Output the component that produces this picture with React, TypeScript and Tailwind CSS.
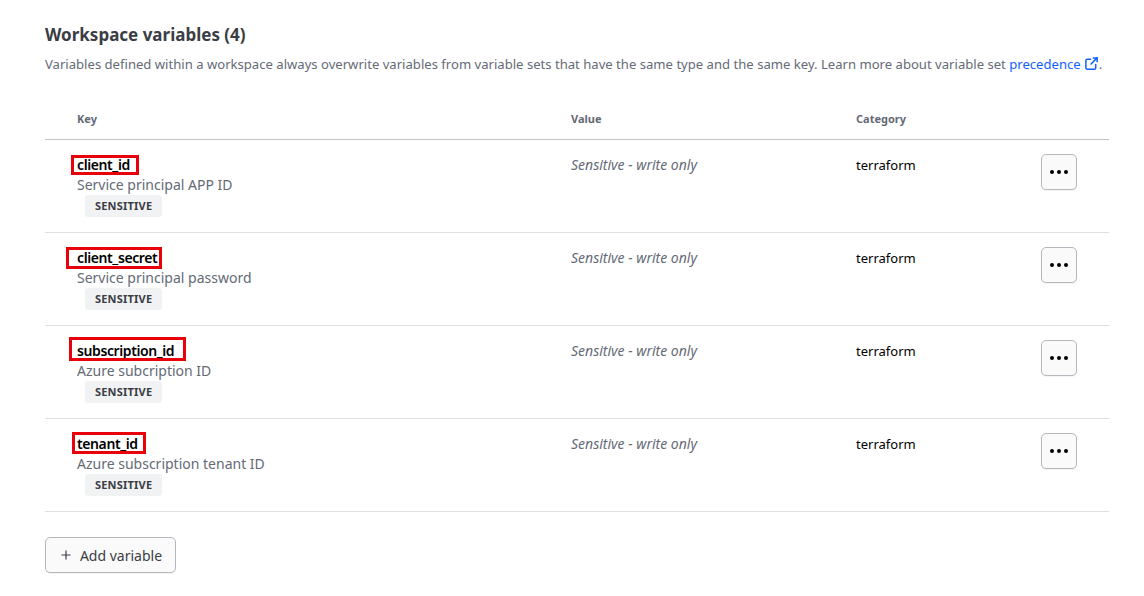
import { Plus } from "lucide-react";

type Variable = {
  name: string;
  description: string;
  // red annotation box, relative to the key text
  box: { left: number; top: number; width: number; height: number };
};

const variables: Variable[] = [
  {
    name: "client_id",
    description: "Service principal APP ID",
    box: { left: -6, top: 0, width: 68, height: 20 },
  },
  {
    name: "client_secret",
    description: "Service principal password",
    box: { left: -11, top: -1, width: 96, height: 22 },
  },
  {
    name: "subscription_id",
    description: "Azure subcription ID",
    box: { left: -8, top: -4, width: 117, height: 24 },
  },
  {
    name: "tenant_id",
    description: "Azure subscription tenant ID",
    box: { left: -5, top: -2, width: 74, height: 22 },
  },
];

const ExternalLink = () => (
  <svg
    viewBox="0 0 16 16"
    className="inline-block w-[15px] h-[15px] ml-[3px] -mt-[3px] align-middle"
    fill="none"
    stroke="currentColor"
    strokeWidth="1.6"
    strokeLinecap="round"
    strokeLinejoin="round"
  >
    <path d="M12.5 9v3.5a1.5 1.5 0 0 1-1.5 1.5H3.5A1.5 1.5 0 0 1 2 12.5V5a1.5 1.5 0 0 1 1.5-1.5H7" />
    <path d="M10 2h4v4" />
    <path d="M14 2 7.5 8.5" />
  </svg>
);

const VariableRow = ({ v }: { v: Variable }) => (
  <div className="grid grid-cols-[526px_285px_185px_68px] border-b border-[#dedfe3] pt-[15px] pb-[15px]">
    <div className="pl-8 flex flex-col items-start">
      <span className="relative text-[14px] leading-5 font-semibold tracking-[-0.4px] text-black">
        {v.name}
        <span
          className="absolute border-[3px] border-[#e8000b] pointer-events-none"
          style={{
            left: v.box.left,
            top: v.box.top,
            width: v.box.width,
            height: v.box.height,
          }}
        />
      </span>
      <span className="text-[14px] leading-5 text-[#656a76]">
        {v.description}
      </span>
      <span className="ml-2 h-[22px] px-[10px] flex items-center rounded-[3px] bg-[#f1f2f3] text-[11px] font-bold tracking-[0.2px] text-[#3b3d45]">
        SENSITIVE
      </span>
    </div>
    <div className="text-[14px] leading-5 italic text-[#656a76]">
      Sensitive - write only
    </div>
    <div className="text-[13px] leading-5 text-black">terraform</div>
    <div className="-mt-[1px]">
      <button className="w-9 h-9 flex items-center justify-center gap-[3px] rounded-[5px] border border-[#b5b7bd] bg-[#fafafa] shadow-[0_1px_1px_rgba(0,0,0,0.05)]">
        <span className="w-[4px] h-[4px] rounded-full bg-black" />
        <span className="w-[4px] h-[4px] rounded-full bg-black" />
        <span className="w-[4px] h-[4px] rounded-full bg-black" />
      </button>
    </div>
  </div>
);

export default function App() {
  return (
    <div
      className="w-[1144px] h-[596px] bg-white pl-[45px] pr-[35px] pt-[24px]"
      style={{ fontFamily: '"Noto Sans", "Open Sans", sans-serif' }}
    >
      <h2 className="text-[17px] leading-[22px] font-bold text-[#3b3d45]">
        Workspace variables (4)
      </h2>
      <p className="mt-[8px] text-[13.1px] leading-5 text-[#656a76] whitespace-nowrap">
        Variables defined within a workspace always overwrite variables from
        variable sets that have the same type and the same key. Learn more about
        variable set{" "}
        <span className="text-[#1060ff]">
          precedence
          <ExternalLink />
        </span>
        .
      </p>

      <div className="mt-[27px] w-[1064px]">
        <div className="grid grid-cols-[526px_285px_185px_68px] border-b border-[#c2c5cb] pt-[10px] pb-[12px] text-[11px] leading-4 font-bold text-[#656a76]">
          <div className="pl-8">Key</div>
          <div>Value</div>
          <div>Category</div>
          <div />
        </div>
        {variables.map((v) => (
          <VariableRow key={v.name} v={v} />
        ))}
      </div>

      <button className="mt-[25px] h-[36px] w-[131px] flex items-center justify-center gap-[7px] rounded-[5px] border border-[#b5b7bd] bg-[#fafafa] text-[14px] text-[#3b3d45] shadow-[0_1px_1px_rgba(0,0,0,0.05)]">
        <Plus className="w-[14px] h-[14px]" strokeWidth={2} />
        Add variable
      </button>
    </div>
  );
}
